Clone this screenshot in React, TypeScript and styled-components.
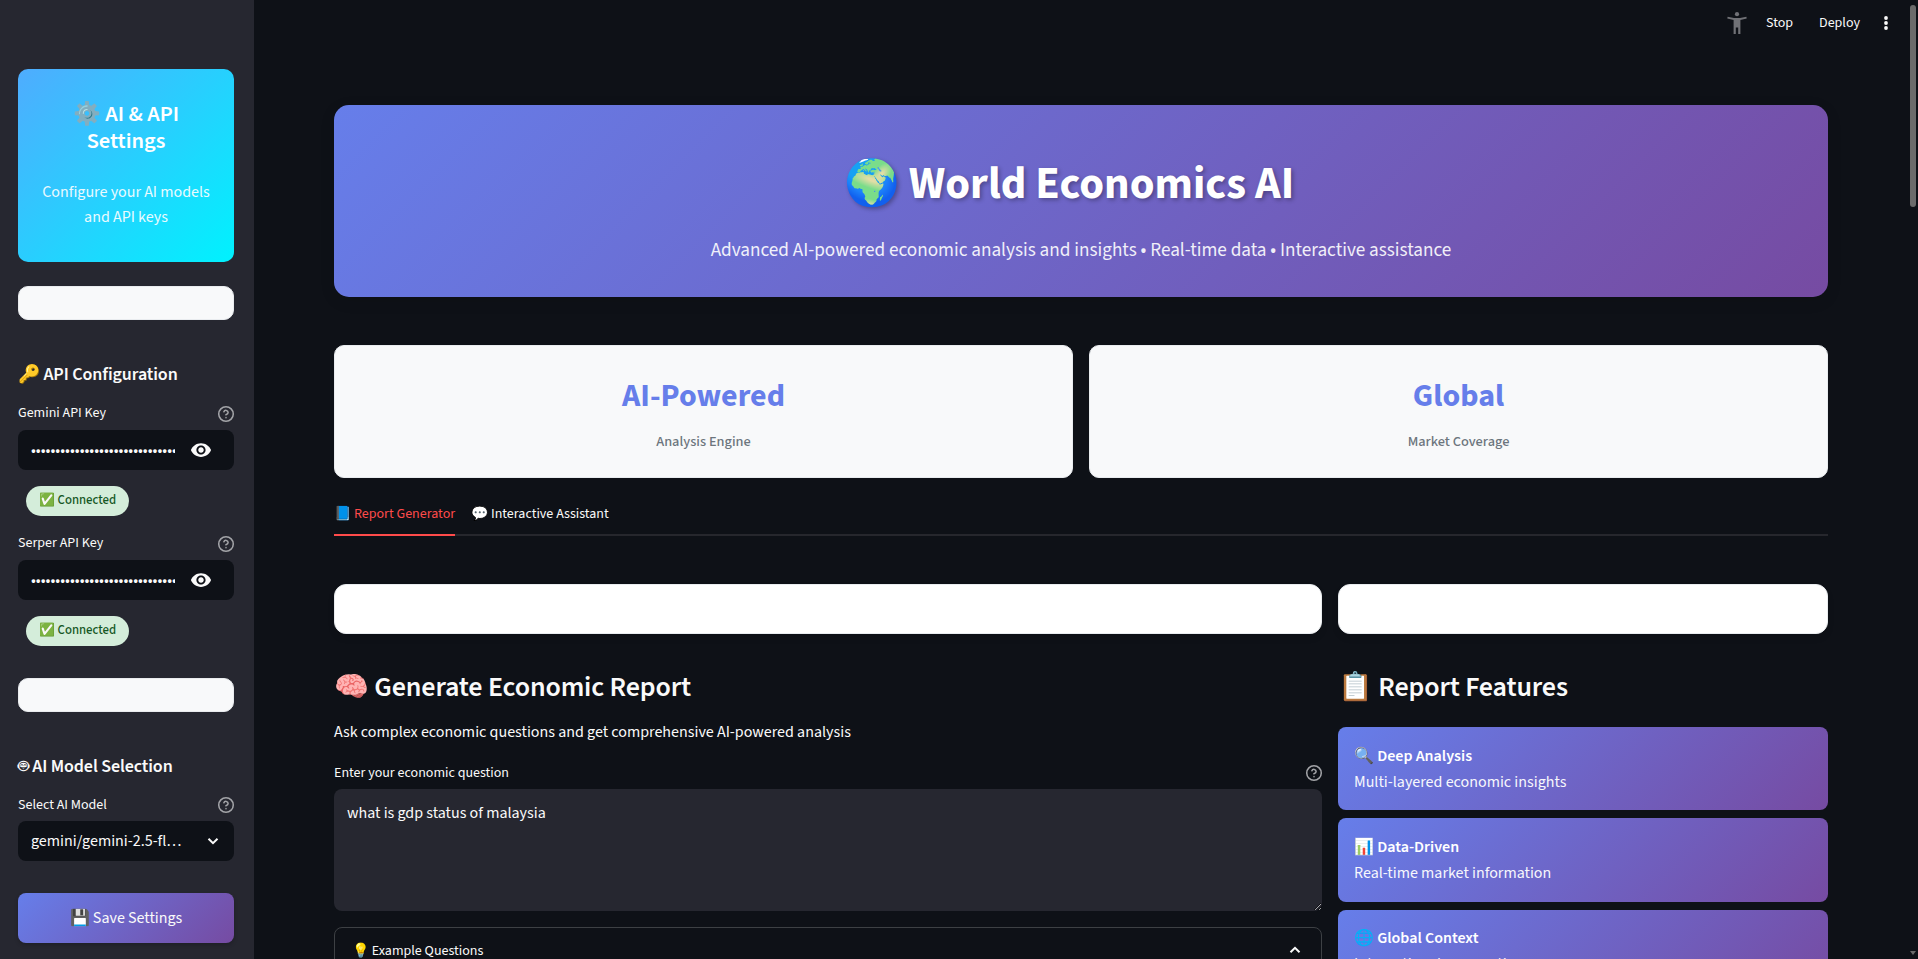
import React from "react";
import styled, { createGlobalStyle, css } from "styled-components";

const brand = "linear-gradient(135deg, #667eea 0%, #764ba2 100%)";

const GlobalStyle = createGlobalStyle`
  *, *::before, *::after { box-sizing: border-box; }
  html { font-size: 16px; }
  body {
    margin: 0;
    overflow: hidden;
    background: #0e1117;
    color: #fafafa;
    font-family: "Source Sans Pro", "Source Sans 3", "Noto Sans CJK SC", sans-serif;
    line-height: 1.6;
  }
  h1, h2, h3, p { margin: 0; }
`;

const Page = styled.div`
  display: flex;
  width: 100vw;
  height: 959px;
  overflow: hidden;
  position: relative;
`;

const Sidebar = styled.aside`
  width: 254px;
  flex: none;
  padding: 69px 20px 0 18px;
  background: #262730;
  display: flex;
  flex-direction: column;
`;

const SettingsCard = styled.div`
  height: 193px;
  padding: 32px 20px 0;
  border-radius: 10px;
  background: linear-gradient(135deg, #4facfe 0%, #00f2fe 100%);
  color: #fff;
  text-align: center;
`;

const SettingsTitle = styled.h3`
  font-size: 22.4px;
  font-weight: 600;
  line-height: 27px;
`;

const SettingsText = styled.p`
  margin-top: 25px;
  font-size: 16px;
  line-height: 25px;
  opacity: 0.9;
`;

const SidePanel = styled.div<{ $gap: number }>`
  height: 34px;
  flex: none;
  margin-top: ${(p) => p.$gap}px;
  border: 1px solid #e9ecef;
  border-radius: 10px;
  background: #f8f9fa;
`;

const SideHeading = styled.h3`
  margin-top: 43px;
  font-size: 18px;
  font-weight: 600;
  letter-spacing: -0.005em;
  line-height: 24px;
  white-space: nowrap;
`;

const LabelRow = styled.div<{ $gap: number; $height?: number }>`
  display: flex;
  align-items: center;
  justify-content: space-between;
  height: ${(p) => p.$height ?? 22}px;
  margin-top: ${(p) => p.$gap}px;
  font-size: 14px;
  line-height: 22px;
`;

const field = css`
  display: flex;
  align-items: center;
  height: 40px;
  margin-top: 6px;
  padding-left: 13px;
  border-radius: 8px;
  background: #0e1117;
`;

const KeyField = styled.div`
  ${field}
`;

const KeyValue = styled.div`
  width: 144px;
  overflow: hidden;
  display: flex;
`;

const KeyDots = styled.span`
  padding-bottom: 1px;
  font-size: 16px;
  line-height: 20px;
  white-space: nowrap;
`;

const EyeIcon = styled.svg`
  width: 22px;
  height: 22px;
  margin-left: 15px;
  fill: #fafafa;
`;

const Badge = styled.span`
  align-self: flex-start;
  width: 103px;
  height: 30px;
  flex: none;
  margin: 16px 0 0 8px;
  padding-left: 13px;
  border-radius: 15px;
  background: #d4edda;
  color: #155724;
  font-size: 12.8px;
  font-weight: 500;
  line-height: 28px;
  white-space: nowrap;
`;

const SelectField = styled.div`
  ${field}
  justify-content: space-between;
  padding-right: 12px;
  line-height: 24px;
`;

const SaveButton = styled.button`
  height: 50px;
  flex: none;
  margin-top: 32px;
  padding-top: 2px;
  border: 0;
  border-radius: 8px;
  background: ${brand};
  box-shadow: 0 2px 4px rgba(0, 0, 0, 0.2);
  color: #fafafa;
  font: inherit;
  font-size: 16px;
`;

const HelpSvg = styled.svg<{ $drop: number }>`
  width: 16px;
  height: 16px;
  margin-top: ${(p) => p.$drop * 2}px;
  overflow: visible;
  fill: none;
  stroke: #a3a4a8;
  stroke-width: 2.1;
  stroke-linecap: round;
  stroke-linejoin: round;
`;

const Main = styled.main`
  flex: 1;
  min-width: 0;
  padding: 0 90px 0 80px;
`;

const Toolbar = styled.header`
  display: flex;
  align-items: center;
  justify-content: flex-end;
  height: 46px;
  margin-right: -63px;
  font-size: 14px;
`;

const Walker = styled.svg`
  width: 20px;
  height: 22px;
  margin-right: 19px;
  fill: #707176;
`;

const ToolbarItem = styled.span<{ $gap: number }>`
  margin-right: ${(p) => p.$gap}px;
`;

const Dots = styled.svg`
  width: 6px;
  height: 16px;
  fill: #fafafa;
  margin-right: 2px;
`;

const Hero = styled.section`
  height: 192px;
  margin-top: 59px;
  padding-top: 45px;
  border-radius: 15px;
  background: ${brand};
  box-shadow: 0 4px 15px rgba(0, 0, 0, 0.1);
  color: #fff;
  text-align: center;
`;

const HeroTitle = styled.h1`
  padding-right: 24px;
  font-size: 44.8px;
  font-weight: 700;
  line-height: 68px;
  text-shadow: 2px 2px 4px rgba(0, 0, 0, 0.3);
`;

const HeroText = styled.p`
  margin-top: 16px;
  font-size: 19.2px;
  line-height: 32px;
  opacity: 0.9;
`;

const Metrics = styled.section`
  display: grid;
  grid-template-columns: 1fr 1fr;
  gap: 16px;
  margin-top: 48px;
`;

const MetricCard = styled.div`
  height: 133px;
  padding-top: 25px;
  border: 1px solid #e9ecef;
  border-radius: 10px;
  background: #f8f9fa;
  text-align: center;
`;

const MetricValue = styled.div`
  color: #667eea;
  font-size: 32px;
  font-weight: 700;
  line-height: 51px;
`;

const MetricLabel = styled.div`
  margin-top: 8px;
  color: #6c757d;
  font-size: 14.4px;
  font-weight: 500;
  line-height: 23px;
`;

const Tabs = styled.nav`
  display: flex;
  gap: 16px;
  height: 42px;
  margin-top: 16px;
  border-bottom: 2px solid #26272d;
`;

const Tab = styled.span<{ $active?: boolean }>`
  height: 42px;
  border-bottom: 2px solid ${(p) => (p.$active ? "#ff4b4b" : "transparent")};
  color: ${(p) => (p.$active ? "#ff4b4b" : "#fafafa")};
  font-size: 14px;
  line-height: 41px;
  word-spacing: 0.1px;
`;

const Columns = styled.div`
  display: grid;
  grid-template-columns: 988px 490px;
  gap: 16px;
  margin-top: 48px;
`;

const Column = styled.div`
  display: flex;
  flex-direction: column;
`;

const BlankPanel = styled.div`
  height: 50px;
  flex: none;
  border: 1px solid #e9ecef;
  border-radius: 12px;
  background: #fff;
  box-shadow: 0 4px 6px rgba(0, 0, 0, 0.1);
`;

const SectionTitle = styled.h2`
  margin-top: 36px;
  font-size: 28px;
  font-weight: 600;
  letter-spacing: -0.005em;
  line-height: 34px;
`;

const Lead = styled.p`
  margin-top: 15px;
  line-height: 26px;
`;

const Question = styled.textarea`
  height: 122px;
  flex: none;
  margin-top: 5px;
  padding: 12px 13px;
  border: 0;
  border-radius: 8px;
  background: #262730;
  color: #fafafa;
  font: inherit;
  line-height: 25px;
  resize: vertical;
`;

const Expander = styled.div`
  display: flex;
  justify-content: space-between;
  height: 60px;
  margin-top: 16px;
  padding: 0 20px 0 17px;
  border: 1px solid #3d4044;
  border-radius: 8px;
  font-size: 14px;
  line-height: 47px;
`;

const ChevronSvg = styled.svg<{ $up?: boolean }>`
  width: 12px;
  height: 12px;
  fill: none;
  stroke: #fafafa;
  stroke-width: 2;
  transform: ${(p) => (p.$up ? "rotate(180deg)" : "none")};
  margin: ${(p) => (p.$up ? "16px 0 0" : "0 3px 0 0")};
`;

const Features = styled.div`
  display: flex;
  flex-direction: column;
  gap: 8px;
  margin-top: 23.2px;
`;

const Feature = styled.div`
  height: 83.2px;
  flex: none;
  padding: 16.8px 16px 15px;
  border-radius: 8px;
  background: ${brand};
  color: #fff;
  line-height: 25.6px;
`;

const FeatureName = styled.strong`
  display: block;
  font-weight: 600;
`;

const FeatureText = styled.span`
  opacity: 0.95;
`;

const Scrollbar = styled.div`
  position: absolute;
  top: 5px;
  right: 2px;
  width: 6px;
  height: 202px;
  border-radius: 3px;
  background: #6b6b6b;
`;

const ScrollArrow = styled.div`
  position: absolute;
  right: 2px;
  bottom: 4px;
  border: 3px solid transparent;
  border-top: 4px solid #6b6b6b;
  border-bottom: 0;
`;

const Help = ({ drop = 0 }: { drop?: number }) => (
  <HelpSvg $drop={drop} viewBox="1 1 22 22">
    <circle cx="12" cy="12" r="10" />
    <path d="M9.09 9a3 3 0 0 1 5.83 1c0 2-3 3-3 3" />
    <path d="M12 17h.01" />
  </HelpSvg>
);

const Chevron = ({ up }: { up?: boolean }) => (
  <ChevronSvg $up={up} viewBox="0 0 12 12">
    <path d="M1.5 3.700 6 8.200l4.500-4.500" />
  </ChevronSvg>
);

const ApiKey = ({ label, gap }: { label: string; gap: number }) => (
  <>
    <LabelRow $gap={gap}>
      {label}
      <Help drop={1} />
    </LabelRow>
    <KeyField>
      <KeyValue>
        <KeyDots>{"•".repeat(39)}</KeyDots>
      </KeyValue>
      <EyeIcon viewBox="0 0 24 24">
        <path d="M12 4.5C7 4.5 2.73 7.61 1 12c1.73 4.39 6 7.5 11 7.5s9.27-3.11 11-7.5c-1.73-4.39-6-7.5-11-7.5zM12 17c-2.76 0-5-2.24-5-5s2.24-5 5-5 5 2.24 5 5-2.24 5-5 5zm0-8c-1.66 0-3 1.34-3 3s1.34 3 3 3 3-1.34 3-3-1.34-3-3-3z" />
      </EyeIcon>
    </KeyField>
    <Badge>✅ Connected</Badge>
  </>
);

const features = [
  ["🔍 Deep Analysis", "Multi-layered economic insights"],
  ["📊 Data-Driven", "Real-time market information"],
  ["🌐 Global Context", "International perspectives"],
];

export default function App() {
  return (
    <Page>
      <GlobalStyle />
      <Sidebar>
        <SettingsCard>
          <SettingsTitle>⚙️ AI &amp; API Settings</SettingsTitle>
          <SettingsText>Configure your AI models and API keys</SettingsText>
        </SettingsCard>
        <SidePanel $gap={24} />
        <SideHeading>🔑 API Configuration</SideHeading>
        <ApiKey label="Gemini API Key" gap={15} />
        <ApiKey label="Serper API Key" gap={16} />
        <SidePanel $gap={32} />
        <SideHeading>🤖&#xFE0E; AI Model Selection</SideHeading>
        <LabelRow $gap={15} $height={21}>
          Select AI Model
          <Help />
        </LabelRow>
        <SelectField>
          gemini/gemini-2.5-fl…
          <Chevron />
        </SelectField>
        <SaveButton>💾 Save Settings</SaveButton>
      </Sidebar>
      <Main>
        <Toolbar>
          <Walker viewBox="0 0 20 22">
            <circle cx="10" cy="2.2" r="2.1" />
            <path d="M.6 4.8 7 6h6l6.400-1.200.3 1.700L13.400 8v14h-2.200v-6.500H8.800V22H6.600V8L.3 6.500z" />
          </Walker>
          <ToolbarItem $gap={26}>Stop</ToolbarItem>
          <ToolbarItem $gap={23}>Deploy</ToolbarItem>
          <Dots viewBox="0 0 6 16">
            <circle cx="3" cy="3" r="1.9" />
            <circle cx="3" cy="8" r="1.9" />
            <circle cx="3" cy="13" r="1.9" />
          </Dots>
        </Toolbar>
        <Hero>
          <HeroTitle>🌍 World Economics AI</HeroTitle>
          <HeroText>
            Advanced AI-powered economic analysis and insights • Real-time data • Interactive assistance
          </HeroText>
        </Hero>
        <Metrics>
          <MetricCard>
            <MetricValue>AI-Powered</MetricValue>
            <MetricLabel>Analysis Engine</MetricLabel>
          </MetricCard>
          <MetricCard>
            <MetricValue>Global</MetricValue>
            <MetricLabel>Market Coverage</MetricLabel>
          </MetricCard>
        </Metrics>
        <Tabs>
          <Tab $active>📘 Report Generator</Tab>
          <Tab>💬 Interactive Assistant</Tab>
        </Tabs>
        <Columns>
          <Column>
            <BlankPanel />
            <SectionTitle>🧠 Generate Economic Report</SectionTitle>
            <Lead>Ask complex economic questions and get comprehensive AI-powered analysis</Lead>
            <LabelRow $gap={17}>
              Enter your economic question
              <Help />
            </LabelRow>
            <Question defaultValue="what is gdp status of malaysia" />
            <Expander>
              💡 Example Questions
              <Chevron up />
            </Expander>
          </Column>
          <Column>
            <BlankPanel />
            <SectionTitle>📋 Report Features</SectionTitle>
            <Features>
              {features.map(([name, text]) => (
                <Feature key={name}>
                  <FeatureName>{name}</FeatureName>
                  <FeatureText>{text}</FeatureText>
                </Feature>
              ))}
            </Features>
          </Column>
        </Columns>
      </Main>
      <Scrollbar />
      <ScrollArrow />
    </Page>
  );
}
